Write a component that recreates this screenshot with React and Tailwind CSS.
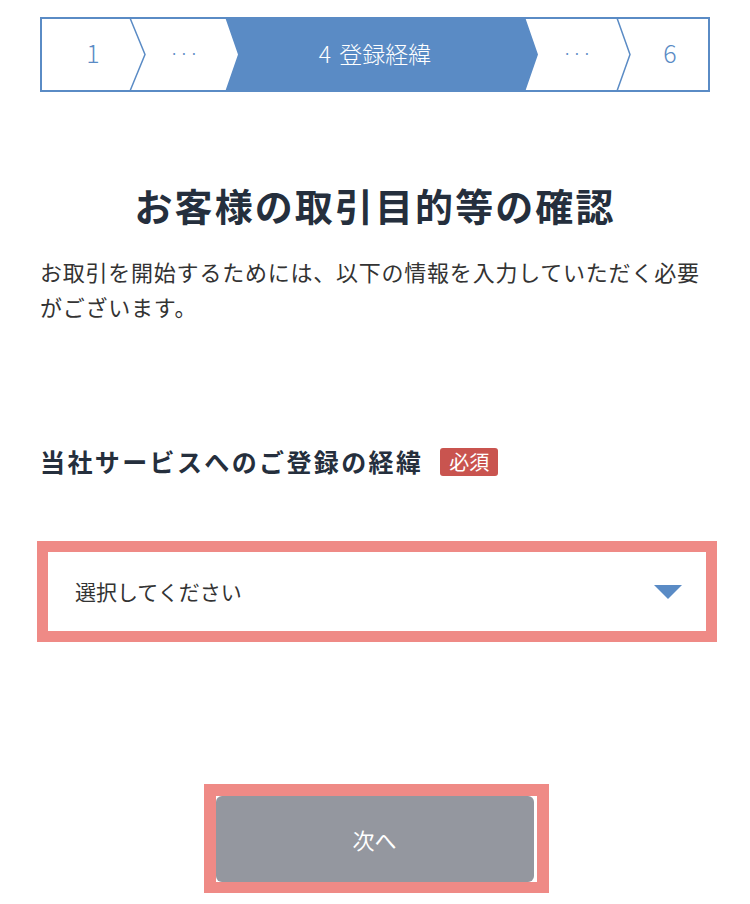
const jp = { fontFamily: '"Noto Sans CJK JP", "Noto Sans", sans-serif' };

function Stepper() {
  return (
    <div className="relative h-[75px] w-[670px]">
      <svg className="absolute inset-0" width="670" height="75" viewBox="0 0 670 75">
        <rect x="1" y="1" width="668" height="73" fill="#fff" stroke="#5a8bc5" strokeWidth="2" />
        <polyline points="90,1 105,37.5 90,74" fill="none" stroke="#5a8bc5" strokeWidth="1.5" />
        <polygon points="185,0 198,37.5 185,75 485,75 498,37.5 485,0" fill="#5a8bc5" />
        <polyline points="577,1 590,37.5 577,74" fill="none" stroke="#5a8bc5" strokeWidth="1.5" />
      </svg>
      <div className="relative flex h-full items-center pb-[3px] text-[#5a8bc5]" style={jp}>
        <div className="flex w-[106px] justify-center text-[25px] font-light">1</div>
        <div className="flex w-[78px] justify-center text-[14px] tracking-[2px]">···</div>
        <div className="flex w-[302px] justify-center text-[23px] font-light text-white">
          <span className="mr-[8px]">4</span>登録経緯
        </div>
        <div className="flex w-[104px] justify-center text-[14px] tracking-[2px]">···</div>
        <div className="flex w-[80px] justify-center text-[25px] font-light">6</div>
      </div>
    </div>
  );
}

export default function App() {
  return (
    <div className="min-h-[904px] w-[750px] bg-white text-[#333]" style={jp}>
      <div className="px-[40px] pt-[17px]">
        <Stepper />

        <h1 className="mt-[84px] text-center text-[38px] font-bold leading-[57px] tracking-[0.055em] text-[#252f3d]">
          お客様の取引目的等の確認
        </h1>
        <p className="mt-[21px] text-[22px] leading-[35px] tracking-[0.035em] text-[#333]">
          お取引を開始するためには、以下の情報を入力していただく必要がございます。
        </p>

        <div className="mt-[118px] flex h-[40px] items-center gap-[17px]">
          <h2 className="text-[25px] font-bold tracking-[0.095em] text-[#252f3d]">当社サービスへのご登録の経緯</h2>
          <span className="flex h-[28px] items-center rounded-[3px] bg-[#c9544f] px-[9px] text-[20px] text-white">
            必須
          </span>
        </div>
      </div>

      <div className="ml-[37px] mt-[59px] w-[680px] border-[11px] border-[#ef8a86] bg-white">
        <div className="flex h-[79px] items-center justify-between pl-[27px] pr-[24px]">
          <span className="text-[21px] text-[#333]">選択してください</span>
          <svg width="28" height="14" viewBox="0 0 28 14">
            <polygon points="0,0 28,0 14,14" fill="#5a8bc5" />
          </svg>
        </div>
      </div>

      <div className="mt-[142px] flex justify-center">
        <div className="ml-[2px] flex w-[345px] border-[12px] border-b-[11px] border-[#ef8a86] bg-white pr-[3px]">
          <button className="flex h-[86px] w-full items-center justify-center rounded-[6px] bg-[#94979f] text-[22px] text-white">
            次へ
          </button>
        </div>
      </div>
    </div>
  );
}
